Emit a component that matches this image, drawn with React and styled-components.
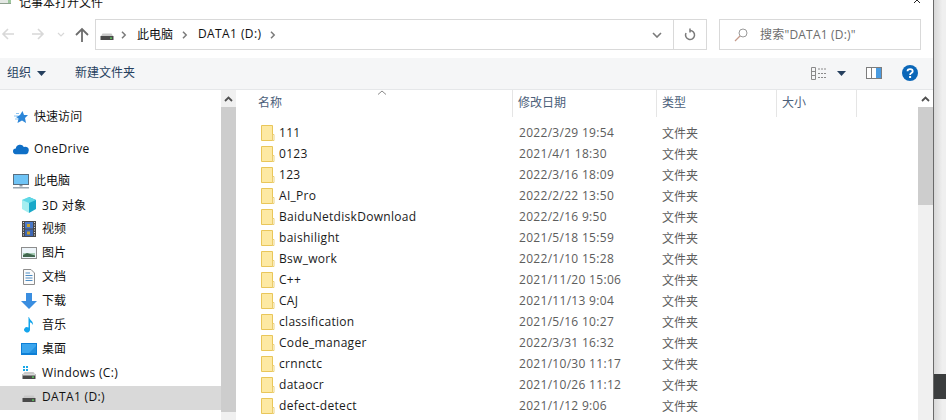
import React from 'react';
import styled, { createGlobalStyle } from 'styled-components';

const Global = createGlobalStyle`
  html, body { margin: 0; padding: 0; background: #fff; }
  #root { width: 946px; height: 420px; overflow: hidden; }
`;
const FONT = `"Open Sans", "Noto Sans CJK SC", sans-serif`;

const Page = styled.div`
  display: flex; width: 946px; height: 420px; overflow: hidden;
  font-family: ${FONT}; font-size: 12px; color: #111;
`;
const Win = styled.div`
  width: 933px; flex: none; display: flex; flex-direction: column; background: #fff;
  border-right: 1px solid #6a6a6a; box-sizing: content-box; overflow: hidden;
`;
const Backdrop = styled.div`
  flex: 1; display: flex; flex-direction: column; padding-top: 374px;
  background: linear-gradient(90deg, #d8d8d8, #efefef 70%);
`;
const DarkBlock = styled.div`height: 25px; background: #3b3d3e;`;
const Title = styled.div`
  height: 18px; flex: none; display: flex; align-items: flex-end; overflow: hidden;
  padding: 0 10px 8px 0; box-sizing: border-box; line-height: 14px;
`;
const TitleIcon = styled.svg`align-self: flex-start; flex: none; margin-right: 8px;`;
const CloseMark = styled.svg`align-self: flex-start; flex: none; margin-left: auto;`;
const Nav = styled.div`
  height: 39px; flex: none; display: flex; align-items: flex-start; padding: 1px 12px 0 0;
`;
const NavArrows = styled.div`display: flex; align-items: center; height: 31px; width: 95px; flex: none;`;
const Address = styled.div`
  flex: 1; height: 31px; box-sizing: border-box; border: 1px solid #d9d9d9; display: flex; align-items: center;
`;
const Crumbs = styled.div`flex: 1; display: flex; align-items: center; padding-left: 3px; gap: 9px;`;
const CrumbText = styled.span`margin-bottom: 2px; letter-spacing: ${p => p.$latin ? '.4px' : 0};`;
const DriveBox = styled.span`width: 16px; height: 16px; flex: none; display: flex; margin-right: -3px;`;
const AddrBtn = styled.div`width: 33px; height: 29px; display: flex; align-items: center; justify-content: center; border-left: ${p => p.$line ? '1px solid #d9d9d9' : '0'}; box-sizing: border-box;`;
const Search = styled.div`
  width: 202px; height: 31px; box-sizing: border-box; border: 1px solid #d9d9d9; display: flex; align-items: center;
  padding-left: 14px; gap: 12px; color: #6d6d6d; flex: none; margin-left: 12px;
`;
const SearchText = styled.span`margin-bottom: 2px; letter-spacing: .2px;`;
const CommandBar = styled.div`
  height: 30px; flex: none; background: #f5f6f7; border-bottom: 1px solid #e5e7e9; box-sizing: content-box;
  display: flex; align-items: center; padding: 0 15px 1px 7px; color: #26405e;
`;
const Cmd = styled.span`margin: 0 ${p => p.$mr || 0}px 2px ${p => p.$ml || 0}px;`;
const Spacer = styled.div`flex: 1;`;
const ViewIcon = styled.svg`margin-right: 10px;`;
const PaneIcon = styled.svg`margin: 0 20px;`;
const Body = styled.div`flex: 1; display: flex; min-height: 0;`;
const Side = styled.div`width: 221px; flex: none; padding-top: 16px; box-sizing: border-box;`;
const SideRow = styled.div`
  height: 24px; display: flex; align-items: center; gap: 5px;
  padding-left: ${p => p.$top ? 13 : 21}px; margin-top: ${p => p.$gap || 0}px;
  background: ${p => p.$sel ? '#d9d9d9' : 'transparent'};
`;
const SideText = styled.span`
  letter-spacing: ${p => p.$latin ? '.35px' : '.05px'};
  margin-bottom: ${p => p.$latin ? 3 : 5}px;
`;
const IconBox = styled.span`width: 16px; height: 16px; flex: none; display: flex; align-items: center; justify-content: center; margin-bottom: 2px;`;
const Scroll = styled.div`
  width: 15px; flex: none; background: #f0f0f0; display: flex; flex-direction: column;
`;
const ScrollUp = styled.div`height: 17px; flex: none; background: ${p => p.$white ? '#fff' : '#f0f0f0'}; display: flex; align-items: center; justify-content: center;`;
const Thumb = styled.div`height: ${p => p.$h}px; background: #cdcdcd; flex: none;`;
const Main = styled.div`flex: 1; min-width: 0; display: flex; flex-direction: column; padding-left: 16px; margin-left: 1px; position: relative;`;
const Header = styled.div`display: grid; grid-template-columns: 260px 144px 120px 80px; height: 27px; flex: none; color: #4c607a;`;
const HCell = styled.div`
  padding: 4px 0 0 5px; box-sizing: border-box; height: 27px; line-height: 18px;
  border-right: 1px solid #e5e5e5;
`;
const SortArrow = styled.svg`position: absolute; left: 140px; top: 0; width: 10px; height: 5px;`;
const List = styled.div`padding-top: 5px;`;
const FileRow = styled.div`
  display: grid; grid-template-columns: 260px 144px 120px; height: 21px; align-items: center; color: #5d5d5d;
`;
const NameCell = styled.div`display: flex; align-items: center; gap: 4px; padding-left: 8px; color: #1a1a1a; letter-spacing: .3px;`;
const DateCell = styled.div`padding-left: 6px; letter-spacing: .3px;`;
const TypeCell = styled.div`padding-left: 5px;`;

const Drive = () => (
  <svg width="16" height="16" viewBox="0 0 16 16">
    <path d="M2 9 L3.500 6.500 H12.500 L14 9Z" fill="#c9c9c9" />
    <rect x="1.500" y="9" width="13" height="4" fill="#4a4a4a" />
    <rect x="11" y="10.500" width="2" height="1.200" fill="#5fe05f" />
  </svg>
);
const Chevron = () => (
  <svg width="7" height="8" viewBox="0 0 7 8"><path d="M1 .8 4.200 4 1 7.200" fill="none" stroke="#7a7a7a" strokeWidth="1.500" /></svg>
);
const Up = () => (
  <svg width="9" height="6" viewBox="0 0 9 6"><path d="M1 5 4.500 1.500 8 5" fill="none" stroke="#505050" strokeWidth="1.800" /></svg>
);
const Caret = ({ c = '#26405e' }) => (
  <svg width="9" height="5" viewBox="0 0 9 5"><path d="M0 0H9L4.500 5Z" fill={c} /></svg>
);
const Folder = () => (
  <svg width="14" height="16" viewBox="0 0 14 16">
    <path d="M.5 .5H11.500V15.500H.5Z" fill="#fde9a3" stroke="#e9c65a" />
    <path d="M11.500 9.500H13V15.500H11.500Z" fill="#fff" stroke="#e9c65a" strokeWidth=".8" />
  </svg>
);
const Star = () => (
  <svg width="16" height="16" viewBox="0 0 16 16">
    <path d="M9.500 2 11 6H15L12 9 13 14 9 11.500 4.500 14 5.500 9.500 3 8 7 6Z" fill="#2c86d8" />
    <path d="M1 7H5M2 10H5M3 4.500H6" stroke="#8cc4f0" strokeWidth="1" />
  </svg>
);
const Cloud = () => (
  <svg width="17" height="12" viewBox="0 0 17 12">
    <path d="M3 11.500A3 3 0 0 1 3 5.500 4.500 4.500 0 0 1 11.500 4 3.600 3.600 0 0 1 16.500 8.500 3 3 0 0 1 14 11.500Z" fill="#0f6fc6" />
  </svg>
);
const Pc = () => (
  <svg width="16" height="15" viewBox="0 0 16 15">
    <rect x=".5" y=".5" width="15" height="10" fill="#6fc4f6" stroke="#5a6f80" />
    <rect x="6.500" y="11" width="3" height="1.500" fill="#8a97a3" />
    <rect y="13" width="16" height="1.500" fill="#9aa6b0" />
  </svg>
);
const Cube = () => (
  <svg width="16" height="16" viewBox="0 0 16 16">
    <path d="M8 0 15 3V12L8 16Z" fill="#1aa9c9" /><path d="M8 0 1 3V12L8 16V6Z" fill="#a5eef0" /><path d="M1 3 8 0 15 3 8 6Z" fill="#5fd8e6" />
  </svg>
);
const Film = () => (
  <svg width="14" height="16" viewBox="0 0 14 16">
    <rect width="14" height="16" fill="#4a4a4a" /><rect x="3" y="1" width="8" height="6.500" fill="#4a78c8" /><rect x="3" y="8.500" width="8" height="6.500" fill="#3d66b5" />
    <rect x="5" y="3" width="3" height="3" fill="#c9a22e" /><rect x="5" y="10.500" width="3" height="3" fill="#c9a22e" />
    <path d="M1.500 1V15M12.500 1V15" stroke="#ddd" strokeWidth="1" strokeDasharray="1 1.500" />
  </svg>
);
const Pic = () => (
  <svg width="16" height="12" viewBox="0 0 16 12">
    <rect x=".5" y=".5" width="15" height="11" fill="#eef5fa" stroke="#8d8d8d" />
    <path d="M2 6 H14 V10 H2Z" fill="#a7cdb6" /><path d="M2 8 6 6 14 8.500V10H2Z" fill="#40664e" />
  </svg>
);
const Doc = () => (
  <svg width="12" height="16" viewBox="0 0 12 16">
    <path d="M.5 .5H8L11.500 4V15.500H.5Z" fill="#fbfbfb" stroke="#8d8d8d" />
    <path d="M2.500 4H7M2.500 6.500H9.500M2.500 9H9.500M2.500 11.500H9.500" stroke="#4e8dc4" strokeWidth="1" />
  </svg>
);
const Down = () => (
  <svg width="16" height="16" viewBox="0 0 16 16"><path d="M5 0H11V8H16L8 16 0 8H5Z" fill="#3a8ee0" /></svg>
);
const Music = () => (
  <svg width="12" height="16" viewBox="0 0 12 16">
    <path d="M6 0C6.500 3 10.500 4 10 8 9 6 7.600 5.500 7 5.500V13A3 2.600 0 1 1 5.500 10.600V0Z" fill="#14a5ec" />
  </svg>
);
const Desk = () => (
  <svg width="16" height="12" viewBox="0 0 16 12">
    <rect width="16" height="12" fill="#0d7fd6" /><rect x="1" y="1" width="14" height="9" fill="#3ba6ee" /><path d="M8 10 15 3V10Z" fill="#2290de" />
  </svg>
);
const WinDrive = () => (
  <svg width="16" height="16" viewBox="0 0 16 16">
    <path d="M2 1H4V3H2ZM5 1H7V3H5ZM2 4H4V6H2ZM5 4H7V6H5Z" fill="#19a8e8" />
    <path d="M2 9 L3.500 7 H12.500 L14 9Z" fill="#c9c9c9" />
    <rect x="1.500" y="9" width="13" height="5" fill="#4a4a4a" /><rect x="1.500" y="9" width="13" height="1.500" fill="#d9d9d9" />
    <rect x="11" y="11.500" width="2" height="1.200" fill="#5fe05f" />
  </svg>
);

const files = [
  ['111', '2022/3/29 19:54'], ['0123', '2021/4/1 18:30'], ['123', '2022/3/16 18:09'], ['AI_Pro', '2022/2/22 13:50'],
  ['BaiduNetdiskDownload', '2022/2/16 9:50'], ['baishilight', '2021/5/18 15:59'], ['Bsw_work', '2022/1/10 15:28'],
  ['C++', '2021/11/20 15:06'], ['CAJ', '2021/11/13 9:04'], ['classification', '2021/5/16 10:27'],
  ['Code_manager', '2022/3/31 16:32'], ['crnnctc', '2021/10/30 11:17'], ['dataocr', '2021/10/26 11:12'],
  ['defect-detect', '2021/1/12 9:06'],
];
const side = [
  { t: '快速访问', I: Star, top: 1 }, { t: 'OneDrive', I: Cloud, top: 1, gap: 8, latin: 1 }, { t: '此电脑', I: Pc, top: 1, gap: 8 },
  { t: '3D 对象', I: Cube, latin: 1 }, { t: '视频', I: Film }, { t: '图片', I: Pic }, { t: '文档', I: Doc }, { t: '下载', I: Down },
  { t: '音乐', I: Music }, { t: '桌面', I: Desk }, { t: 'Windows (C:)', I: WinDrive, latin: 1 }, { t: 'DATA1 (D:)', I: Drive, sel: 1, latin: 1 },
];

export default function App() {
  return (
    <Page>
      <Global />
      <Win>
        <Title>
          <TitleIcon width="11" height="4" viewBox="0 0 11 4">
            <rect width="11" height="3.500" fill="#e4e8e4" /><rect y="3" width="11" height="1" fill="#8fa08f" /><rect x="8" width="3" height="3" fill="#9cc79c" />
          </TitleIcon>
          <span>记事本打开文件</span>
          <CloseMark width="10" height="3" viewBox="0 0 10 3"><path d="M1 3 4 0 7 3" fill="none" stroke="#222" /></CloseMark>
        </Title>
        <Nav>
          <NavArrows>
            <svg width="95" height="31" viewBox="0 0 95 31">
              <path d="M3 15H14M8 10 3 15 8 20" fill="none" stroke="#d8d8d8" strokeWidth="1.600" />
              <path d="M32 15H43M38 10 43 15 38 20" fill="none" stroke="#d8d8d8" strokeWidth="1.600" />
              <path d="M58 14 61 17 64 14" fill="none" stroke="#d8d8d8" strokeWidth="1.200" />
              <path d="M82 23V10M76 16 82 10 88 16" fill="none" stroke="#6d6d6d" strokeWidth="1.800" />
            </svg>
          </NavArrows>
          <Address>
            <Crumbs>
              <DriveBox><Drive /></DriveBox>
              <Chevron /><CrumbText>此电脑</CrumbText><Chevron /><CrumbText $latin>DATA1 (D:)</CrumbText><Chevron />
            </Crumbs>
            <AddrBtn>
              <svg width="10" height="6" viewBox="0 0 10 6"><path d="M1 1 5 5 9 1" fill="none" stroke="#7a7a7a" strokeWidth="1.600" /></svg>
            </AddrBtn>
            <AddrBtn $line>
              <svg width="12" height="14" viewBox="0 0 12 14"><path d="M6 2.500A4.500 4.500 0 1 1 2 5M6 .5V4.500" fill="none" stroke="#7a7a7a" strokeWidth="1.500" /></svg>
            </AddrBtn>
          </Address>
          <Search>
            <svg width="14" height="14" viewBox="0 0 14 14"><circle cx="9" cy="5" r="4" fill="none" stroke="#9a9a9a" /><path d="M6 8 1 13" stroke="#c59a8a" strokeWidth="1.200" /></svg>
            <SearchText>搜索"DATA1 (D:)"</SearchText>
          </Search>
        </Nav>
        <CommandBar>
          <Cmd $mr={6}>组织</Cmd><Caret /><Cmd $ml={29}>新建文件夹</Cmd>
          <Spacer />
          <ViewIcon width="16" height="13" viewBox="0 0 16 13">
            <path d="M.5.5H4.500V12.500H.5ZM.5 4.500H4.500M.5 8.500H4.500" fill="none" stroke="#8a8a8a" />
            <path d="M7 2H16M7 6.500H16M7 10.500H16" stroke="#8a8a8a" strokeDasharray="2 1" />
          </ViewIcon>
          <Caret />
          <PaneIcon width="16" height="12" viewBox="0 0 16 12">
            <rect x=".5" y=".5" width="15" height="11" fill="#fff" stroke="#7d7d7d" />
            <rect x="10" y="1" width="5" height="10" fill="#4a9be0" /><path d="M5.500 1V11" stroke="#7d7d7d" />
          </PaneIcon>
          <svg width="16" height="16" viewBox="0 0 16 16">
            <circle cx="8" cy="8" r="8" fill="#0b67b8" />
            <path d="M5.500 6.200C5.500 3.300 10.700 3.300 10.700 6.200 10.700 8.200 8.100 8 8.100 10" fill="none" stroke="#fff" strokeWidth="1.800" />
            <rect x="7.100" y="11" width="2" height="2" fill="#fff" />
          </svg>
        </CommandBar>
        <Body>
          <Side>
            {side.map(({ t, I, top, gap, sel, latin }) => (
              <SideRow key={t} $top={top} $gap={gap} $sel={sel}><IconBox><I /></IconBox><SideText $latin={latin}>{t}</SideText></SideRow>
            ))}
          </Side>
          <Scroll>
            <ScrollUp><Up /></ScrollUp>
            <Thumb $h={305} />
          </Scroll>
          <Main>
            <Header>
              <HCell>名称</HCell><HCell>修改日期</HCell><HCell>类型</HCell><HCell>大小</HCell>
            </Header>
            <SortArrow viewBox="0 0 10 5"><path d="M1 4.500 5 1 9 4.500" fill="none" stroke="#8a8a8a" /></SortArrow>
            <List>
              {files.map(([n, d]) => (
                <FileRow key={n}>
                  <NameCell><Folder /><span>{n}</span></NameCell>
                  <DateCell>{d}</DateCell>
                  <TypeCell>文件夹</TypeCell>
                </FileRow>
              ))}
            </List>
          </Main>
          <Scroll>
            <ScrollUp $white><Up /></ScrollUp>
            <Thumb $h={98} />
          </Scroll>
        </Body>
      </Win>
      <Backdrop><DarkBlock /></Backdrop>
    </Page>
  );
}
